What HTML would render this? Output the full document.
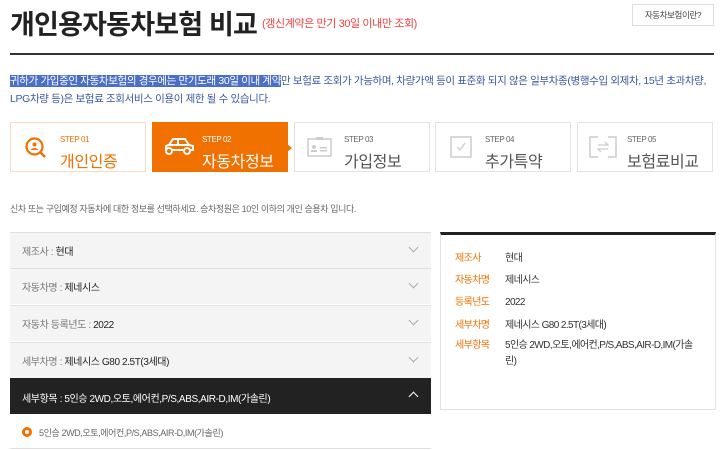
<!DOCTYPE html>
<html><head><meta charset="utf-8"><style>
*{margin:0;padding:0;box-sizing:border-box}
body{width:720px;height:450px;overflow:hidden;background:#fff;font-family:"Liberation Sans","Noto Sans CJK KR",sans-serif;color:#333;position:relative;letter-spacing:-0.4px}
.a{position:absolute}
.step{position:absolute;top:122px;width:136px;height:50px;border:1px solid #e3e3e3;background:#fff}
.step .l{position:absolute;left:49px;top:12px;font-size:8px;color:#666}
.step .t{position:absolute;left:49px;top:25px;font-size:16px;color:#555}
.row{position:absolute;left:10px;width:421px;height:36px;background:#f4f4f4;border-top:1px solid #e0e0e0;font-size:10px;color:#777;padding:10px 0 0 12px}
.row b{color:#222;font-weight:normal}
.chev{position:absolute;right:14px;top:11px;width:7px;height:7px;border-right:1px solid #aaa;border-bottom:1px solid #aaa;transform:rotate(45deg)}
.info{position:absolute;left:455px;font-size:10px;letter-spacing:-0.6px}
.info span{color:#f07000;display:inline-block;width:50px}
</style></head><body>
<div class="a" style="left:10px;top:3px;font-size:27px;font-weight:bold;color:#222;letter-spacing:-0.8px">개인용자동차보험 비교</div>
<div class="a" style="left:262px;top:15px;font-size:11px;color:#f04040">(갱신계약은 만기 30일 이내만 조회)</div>
<div class="a" style="left:632px;top:4px;width:82px;height:22px;border:1px solid #ddd;font-size:8.5px;color:#444;text-align:center;line-height:20px">자동차보험이란?</div>
<div class="a" style="left:10px;top:53px;width:704px;height:2px;background:#333"></div>
<div class="a" style="left:10px;top:72px;width:712px;font-size:10.5px;line-height:18px;color:#3a5aa0;letter-spacing:-0.35px;white-space:nowrap"><span style="background:#4b6fc9;color:#fff">귀하가 가입중인 자동차보험의 경우에는 만기도래 30일 이내 계약</span>만 보험료 조회가 가능하며, 차량가액 등이 표준화 되지 않은 일부차종(병행수입 외제차, 15년 초과차량,<br>LPG차량 등)은 보험료 조회서비스 이용이 제한 될 수 있습니다.</div>

<div class="step" style="left:10px;border-color:#f9d9c2"><svg class="a" style="left:13px;top:13px" width="24" height="24" viewBox="0 0 24 24"><circle cx="10.5" cy="10.5" r="8" fill="none" stroke="#f07000" stroke-width="2.2"/><line x1="16" y1="16" x2="21" y2="21" stroke="#f07000" stroke-width="2.4"/><circle cx="10.5" cy="8.5" r="2" fill="#f07000"/><path d="M7 14c0-2.5 7-2.5 7 0z" fill="#f07000"/></svg><div class="l" style="color:#f07000">STEP 01</div><div class="t" style="color:#f07000">개인인증</div></div>
<div class="step" style="left:152px;background:#f07000;border-color:#f07000"><svg class="a" style="left:9px;top:12px" width="34" height="24" viewBox="0 0 34 24"><path d="M4 15v-4l3-1 4-6h12l4 6 4 1v4h-3M10 15h11" fill="none" stroke="#fff" stroke-width="2"/><circle cx="7" cy="16" r="3" fill="none" stroke="#fff" stroke-width="2"/><circle cx="25" cy="16" r="3" fill="none" stroke="#fff" stroke-width="2"/><line x1="16" y1="4" x2="16" y2="10" stroke="#fff" stroke-width="2"/><line x1="7" y1="10" x2="27" y2="10" stroke="#fff" stroke-width="2"/></svg><div class="l" style="color:#fff">STEP 02</div><div class="t" style="color:#fff">자동차정보</div><div class="a" style="right:-5px;top:21px;border-left:5px solid #f07000;border-top:4px solid transparent;border-bottom:4px solid transparent"></div></div>
<div class="step" style="left:294px"><svg class="a" style="left:12px;top:13px" width="26" height="22"><rect x="1" y="3" width="23" height="17" fill="none" stroke="#ccc" stroke-width="1.5"/><rect x="9" y="1" width="7" height="3" fill="#ccc"/><circle cx="7" cy="11" r="2" fill="#ccc"/><rect x="4" y="14" width="6" height="2" fill="#ccc"/><rect x="13" y="11" width="7" height="1.5" fill="#ccc"/><rect x="13" y="14" width="7" height="1.5" fill="#ccc"/></svg><div class="l">STEP 03</div><div class="t">가입정보</div></div>
<div class="step" style="left:435px"><svg class="a" style="left:14px;top:13px" width="22" height="22"><rect x="1" y="1" width="20" height="20" fill="none" stroke="#ccc" stroke-width="1.5"/><path d="M7 11l3 3 5-7" fill="none" stroke="#ccc" stroke-width="1.3"/></svg><div class="l">STEP 04</div><div class="t">추가특약</div></div>
<div class="step" style="left:577px"><svg class="a" style="left:11px;top:13px" width="28" height="22"><path d="M9 1H1v20h8M19 1h8v20h-8" fill="none" stroke="#ccc" stroke-width="1.5"/><path d="M9 9h10l-3-3M19 13H9l3 3" fill="none" stroke="#ccc" stroke-width="1.3"/></svg><div class="l">STEP 05</div><div class="t">보험료비교</div></div>

<div class="a" style="left:10px;top:202px;font-size:9px;color:#666">신차 또는 구입예정 자동차에 대한 정보를 선택하세요. 승차정원은 10인 이하의 개인 승용차 입니다.</div>

<div class="row" style="top:232px">제조사 : <b>현대</b><div class="chev"></div></div>
<div class="row" style="top:268px">자동차명 : <b>제네시스</b><div class="chev"></div></div>
<div class="row" style="top:305px">자동차 등록년도 : <b>2022</b><div class="chev"></div></div>
<div class="row" style="top:342px">세부차명 : <b>제네시스 G80 2.5T(3세대)</b><div class="chev"></div></div>
<div class="row" style="top:378px;background:#222;color:#fff;border:none;padding-top:12px">세부항목 : 5인승 2WD,오토,에어컨,P/S,ABS,AIR-D,IM(가솔린)<div class="chev" style="border-color:#fff;transform:rotate(225deg);top:15px"></div></div>
<div class="a" style="left:22px;top:427px;width:10px;height:10px;border-radius:50%;background:#f07000"><div class="a" style="left:3px;top:3px;width:4px;height:4px;border-radius:50%;background:#fff"></div></div>
<div class="a" style="left:39px;top:426px;font-size:9px;color:#666">5인승 2WD,오토,에어컨,P/S,ABS,AIR-D,IM(가솔린)</div>
<div class="a" style="left:10px;top:448px;width:421px;height:1px;background:#e0e0e0"></div>

<div class="a" style="left:440px;top:232px;width:276px;height:178px;border:1px solid #e3e3e3;border-top:3px solid #222"></div>
<div class="info" style="top:249px"><span>제조사</span>현대</div>
<div class="info" style="top:271px"><span>자동차명</span>제네시스</div>
<div class="info" style="top:293px"><span>등록년도</span>2022</div>
<div class="info" style="top:316px"><span>세부차명</span>제네시스 G80 2.5T(3세대)</div>
<div class="info" style="top:338px;width:245px;line-height:16px;display:flex"><span style="flex:none">세부항목</span><div>5인승 2WD,오토,에어컨,P/S,ABS,AIR-D,IM(가솔<br>린)</div></div>
</body></html>
